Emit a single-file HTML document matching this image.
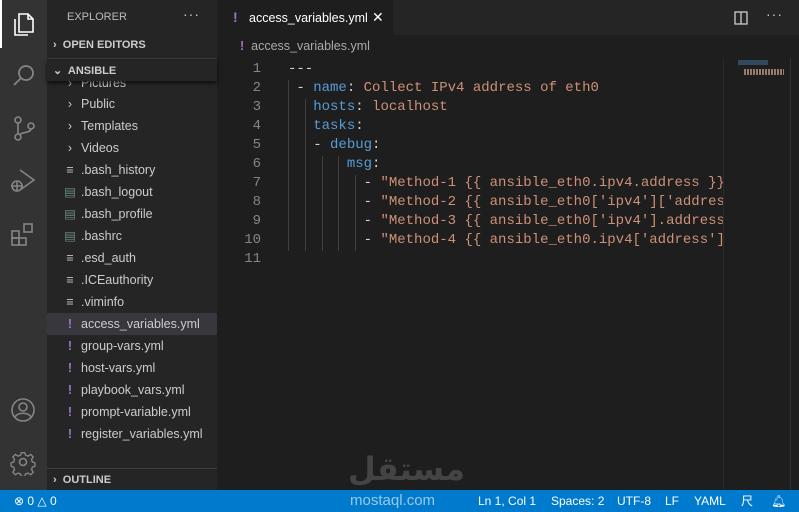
<!DOCTYPE html><html><head><meta charset="utf-8"><style>
*{margin:0;padding:0;box-sizing:border-box}
body{width:799px;height:512px;overflow:hidden;background:#1e1e1e;font-family:"Liberation Sans",sans-serif;position:relative;color:#ccc}
.abs{position:absolute}
#act{left:0;top:0;width:47px;height:490px;background:#333}
#side{left:47px;top:0;width:170px;height:490px;background:#252526}
#tabs{left:217px;top:0;width:582px;height:35px;background:#252526}
#tab{left:217px;top:0;width:176px;height:35px;background:#1e1e1e;font-size:12.5px;color:#fff}
.item{position:absolute;left:0;width:170px;height:22px;font-size:12.5px;color:#ccc;line-height:22px}
.item .ic{position:absolute;left:17px;width:12px;text-align:center;color:#c5c5c5}
.item .t{position:absolute;left:34px}
.ex{color:#a074c4!important;font-weight:bold}
.code{font-family:"Liberation Mono","DejaVu Sans Mono",monospace;font-size:14px;white-space:pre;line-height:19px}
.ln{left:230px;width:31px;text-align:right;color:#858585}
.k{color:#569cd6}.s{color:#ce9178}.p{color:#d4d4d4}
.g{position:absolute;width:1px;background:#404040}
#status{left:0;top:490px;width:799px;height:22px;background:#007acc;color:#fff;font-size:12px;line-height:22px}
</style></head><body>
<div id="act" class="abs">
<div class="abs" style="left:0;top:0;width:2px;height:48px;background:#fff"></div>
<svg class="abs" style="left:10px;top:10px" width="28" height="28" viewBox="0 0 28 28" fill="none" stroke="#fff" stroke-width="1.6"><path d="M9 4h9l5 5v13H9z"/><path d="M18 4v5h5"/><path d="M5 9v16h13"/></svg>
<svg class="abs" style="left:10px;top:62px" width="28" height="28" viewBox="0 0 28 28" fill="none" stroke="#858585" stroke-width="1.8"><circle cx="16" cy="11" r="7"/><path d="M11 16l-7 7"/></svg>
<svg class="abs" style="left:10px;top:114px" width="28" height="28" viewBox="0 0 28 28" fill="none" stroke="#858585" stroke-width="1.6"><circle cx="8" cy="6" r="3"/><circle cx="8" cy="23" r="3"/><circle cx="21" cy="12" r="3"/><path d="M8 9v11M21 15c0 4-10 3-12 6"/></svg>
<svg class="abs" style="left:8px;top:166px" width="30" height="30" viewBox="0 0 30 30" fill="none" stroke="#858585" stroke-width="1.6"><path d="M12 4l14 10-14 10"/><circle cx="9" cy="20" r="5"/><path d="M3 20h12M9 15v10"/></svg>
<svg class="abs" style="left:9px;top:220px" width="28" height="28" viewBox="0 0 28 28" fill="none" stroke="#858585" stroke-width="1.6"><rect x="3" y="11" width="7" height="7"/><rect x="10" y="18" width="7" height="7"/><rect x="3" y="18" width="7" height="7"/><rect x="15" y="4" width="8" height="8"/></svg>
<svg class="abs" style="left:9px;top:396px" width="28" height="28" viewBox="0 0 28 28" fill="none" stroke="#858585" stroke-width="1.6"><circle cx="14" cy="14" r="11"/><circle cx="14" cy="11" r="4"/><path d="M6 21c3-5 13-5 16 0"/></svg>
<svg class="abs" style="left:9px;top:448px" width="28" height="28" viewBox="0 0 28 28" fill="none" stroke="#858585" stroke-width="1.6"><circle cx="14" cy="14" r="3.5"/><path d="M12 3h4l1 3 3 1 3-2 3 3-2 3 1 3 3 1v4l-3 1-1 3 2 3-3 3-3-2-3 1-1 3h-4l-1-3-3-1-3 2-3-3 2-3-1-3-3-1v-4l3-1 1-3-2-3 3-3 3 2 3-1z" transform="scale(.85) translate(2.5 2.5)"/></svg>
</div>
<div id="side" class="abs">
<div class="abs" style="left:20px;top:11px;font-size:11px;color:#bbb">EXPLORER</div>
<div class="abs" style="left:136px;top:6px;font-size:14px;color:#ccc;letter-spacing:1px">···</div>
<div class="abs" style="left:6px;top:39px;font-size:11px;font-weight:bold;color:#ccc">›&nbsp; OPEN EDITORS</div>
<div class="abs" style="left:0;top:58px;width:170px;height:1px;background:#3c3c3c"></div>
<div class="item" style="top:72px;color:#ccc"><span class="t">Pictures</span><span class="ic">›</span></div>
<div class="abs" style="left:0;top:60px;width:170px;height:21px;background:#252526;box-shadow:0 2px 4px #000a"><span style="position:absolute;left:6px;top:4px;font-size:11px;font-weight:bold;color:#ccc">⌄&nbsp; ANSIBLE</span></div>
<div class="item" style="top:93px"><span class="ic">›</span><span class="t">Public</span></div>
<div class="item" style="top:115px"><span class="ic">›</span><span class="t">Templates</span></div>
<div class="item" style="top:137px"><span class="ic">›</span><span class="t">Videos</span></div>
<div class="item" style="top:159px"><span class="ic">≡</span><span class="t">.bash_history</span></div>
<div class="item" style="top:181px"><span class="ic" style="color:#6a8a7a">▤</span><span class="t">.bash_logout</span></div>
<div class="item" style="top:203px"><span class="ic" style="color:#6a8a7a">▤</span><span class="t">.bash_profile</span></div>
<div class="item" style="top:225px"><span class="ic" style="color:#6a8a7a">▤</span><span class="t">.bashrc</span></div>
<div class="item" style="top:247px"><span class="ic">≡</span><span class="t">.esd_auth</span></div>
<div class="item" style="top:269px"><span class="ic">≡</span><span class="t">.ICEauthority</span></div>
<div class="item" style="top:291px"><span class="ic">≡</span><span class="t">.viminfo</span></div>
<div class="item" style="top:313px;background:#37373d"><span class="ic ex">!</span><span class="t">access_variables.yml</span></div>
<div class="item" style="top:335px"><span class="ic ex">!</span><span class="t">group-vars.yml</span></div>
<div class="item" style="top:357px"><span class="ic ex">!</span><span class="t">host-vars.yml</span></div>
<div class="item" style="top:379px"><span class="ic ex">!</span><span class="t">playbook_vars.yml</span></div>
<div class="item" style="top:401px"><span class="ic ex">!</span><span class="t">prompt-variable.yml</span></div>
<div class="item" style="top:423px"><span class="ic ex">!</span><span class="t">register_variables.yml</span></div>
<div class="abs" style="left:0;top:468px;width:170px;height:1px;background:#3c3c3c"></div>
<div class="abs" style="left:6px;top:474px;font-size:11px;font-weight:bold;color:#ccc">›&nbsp; OUTLINE</div>
</div>
<div id="tabs" class="abs"></div>
<div id="tab" class="abs"><span class="abs ex" style="left:16px;top:9px;font-size:14px;color:#a074c4">!</span><span class="abs" style="left:32px;top:11px">access_variables.yml</span><span class="abs" style="left:155px;top:9px;font-size:14px">✕</span></div>
<svg class="abs" style="left:734px;top:11px" width="14" height="14" viewBox="0 0 14 14" fill="none" stroke="#ccc" stroke-width="1.3"><rect x="1" y="1" width="12" height="12"/><path d="M7 1v12"/></svg>
<div class="abs" style="left:766px;top:6px;font-size:14px;color:#ccc;letter-spacing:1px">···</div>
<div class="abs" style="left:240px;top:39px;font-size:12.5px;color:#aaa"><span style="color:#a074c4;font-weight:bold">!</span>&nbsp; access_variables.yml</div>
<div class="abs code ln" style="top:60px">1
2
3
4
5
6
7
8
9
10
11</div>
<div class="g" style="left:288px;top:80px;height:171px"></div>
<div class="g" style="left:305px;top:99px;height:152px"></div>
<div class="g" style="left:322px;top:156px;height:95px"></div>
<div class="g" style="left:338px;top:156px;height:95px"></div>
<div class="g" style="left:355px;top:175px;height:76px"></div>
<div class="abs code" style="left:288px;top:60px;width:435px;overflow:hidden"><span class="p">---</span>
 <span class="p">- </span><span class="k">name</span><span class="p">: </span><span class="s">Collect IPv4 address of eth0</span>
   <span class="k">hosts</span><span class="p">: </span><span class="s">localhost</span>
   <span class="k">tasks</span><span class="p">:</span>
   <span class="p">- </span><span class="k">debug</span><span class="p">:</span>
       <span class="k">msg</span><span class="p">:</span>
         <span class="p">- </span><span class="s">"Method-1 {{ ansible_eth0.ipv4.address }}"</span>
         <span class="p">- </span><span class="s">"Method-2 {{ ansible_eth0['ipv4']['address'] }}"</span>
         <span class="p">- </span><span class="s">"Method-3 {{ ansible_eth0['ipv4'].address }}"</span>
         <span class="p">- </span><span class="s">"Method-4 {{ ansible_eth0.ipv4['address'] }}"</span>
</div>
<div class="abs" style="left:723px;top:58px;width:1px;height:432px;background:#2a2a2a"></div>
<div class="abs" style="left:790px;top:58px;width:1px;height:432px;background:#333"></div>
<div class="abs" style="left:738px;top:60px;width:30px;height:5px;background:#3a5a7a;opacity:.7"></div>
<div class="abs" style="left:744px;top:69px;width:40px;height:6px;background:repeating-linear-gradient(90deg,#9a7a6a 0 2px,#1e1e1e 2px 3px)"></div>
<div class="abs" style="left:348px;top:450px;font-size:32px;font-weight:bold;color:#444;font-family:'DejaVu Sans',sans-serif">مستقل</div>
<div id="status" class="abs">
<span class="abs" style="left:14px">⊗ 0 △ 0</span>
<span class="abs" style="left:350px;color:#9cc8ea;font-size:15px">mostaql.com</span>
<span class="abs" style="left:478px">Ln 1, Col 1</span>
<span class="abs" style="left:551px">Spaces: 2</span>
<span class="abs" style="left:617px">UTF-8</span>
<span class="abs" style="left:665px">LF</span>
<span class="abs" style="left:694px">YAML</span>
<span class="abs" style="left:741px">尺</span>
<span class="abs" style="left:771px">🔔︎</span>
</div>
</body></html>
